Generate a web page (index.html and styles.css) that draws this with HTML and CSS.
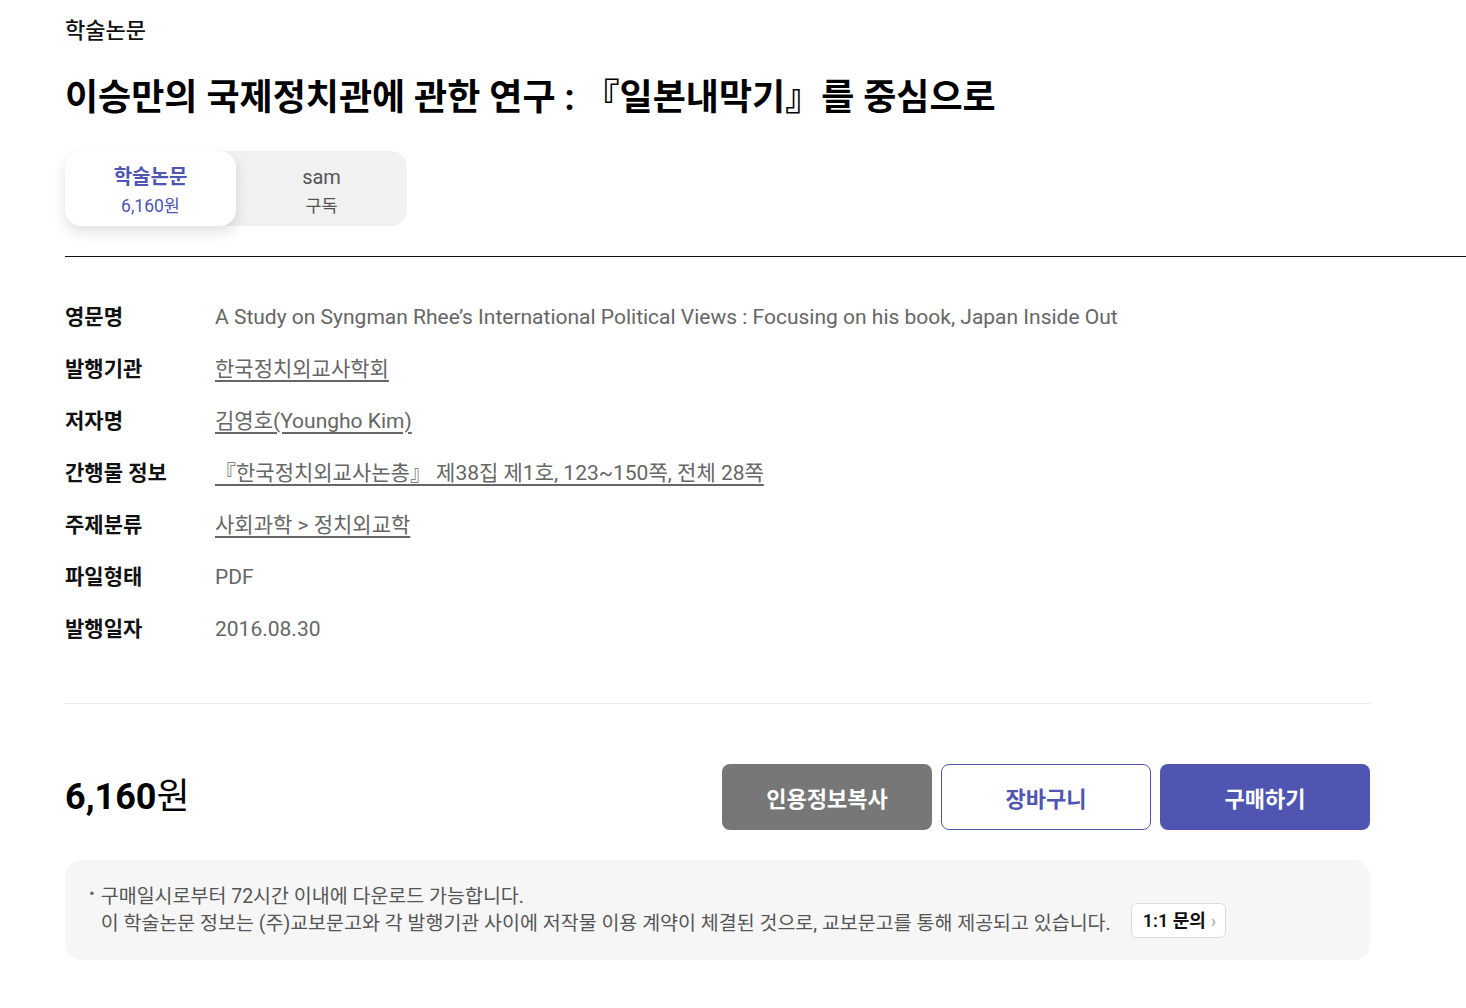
FILE: index.html
```html
<!DOCTYPE html>
<html lang="ko">
<head>
<meta charset="utf-8">
<link rel="stylesheet" href="styles.css">
</head>
<body>
<div class="page">
  <div class="category">학술논문</div>
  <h1 class="title">이승만의 국제정치관에 관한 연구 : 『일본내막기』를 중심으로</h1>
  <div class="tabs">
    <div class="tab active">
      <div class="tab-name">학술논문</div>
      <div class="tab-sub">6,160원</div>
    </div>
    <div class="tab">
      <div class="tab-name">sam</div>
      <div class="tab-sub">구독</div>
    </div>
  </div>
  <div class="rule"></div>
  <div class="content">
    <dl class="info">
      <div class="row"><dt>영문명</dt><dd>A Study on Syngman Rhee’s International Political Views : Focusing on his book, Japan Inside Out</dd></div>
      <div class="row"><dt>발행기관</dt><dd><a href="#">한국정치외교사학회</a></dd></div>
      <div class="row"><dt>저자명</dt><dd><a href="#">김영호(Youngho Kim)</a></dd></div>
      <div class="row"><dt>간행물 정보</dt><dd><a href="#">『한국정치외교사논총』 제38집 제1호, 123~150쪽, 전체 28쪽</a></dd></div>
      <div class="row"><dt>주제분류</dt><dd><a href="#">사회과학 &gt; 정치외교학</a></dd></div>
      <div class="row"><dt>파일형태</dt><dd>PDF</dd></div>
      <div class="row"><dt>발행일자</dt><dd>2016.08.30</dd></div>
    </dl>
    <div class="divider"></div>
    <div class="buy">
      <div class="price"><strong>6,160</strong>원</div>
      <div class="actions">
        <button class="btn btn-gray">인용정보복사</button>
        <button class="btn btn-outline">장바구니</button>
        <button class="btn btn-primary">구매하기</button>
      </div>
    </div>
    <div class="notice">
      <span class="bullet">•</span>
      <div class="notice-text">
        <p>구매일시로부터 72시간 이내에 다운로드 가능합니다.</p>
        <p class="last">이 학술논문 정보는 (주)교보문고와 각 발행기관 사이에 저작물 이용 계약이 체결된 것으로, 교보문고를 통해 제공되고 있습니다. <a class="ask" href="#">1:1 문의<span class="chev">›</span></a></p>
      </div>
    </div>
  </div>
</div>
</body>
</html>
```

FILE: styles.css
```css
* { box-sizing: border-box; }
html, body { margin: 0; padding: 0; background: #fff; }
body {
  font-family: Roboto, "Noto Sans CJK KR", sans-serif;
  color: #111;
}
.page { padding: 16px 0 40px 65px; }
.category { font-size: 22px; line-height: 30px; font-weight: 500; color: #111; }
.title {
  margin: 30px 0 0;
  font-size: 36px;
  line-height: 44px;
  font-weight: 700;
  color: #000;
}
.tabs {
  margin-top: 31px;
  display: flex;
  width: 342px;
  height: 75px;
  background: #f1f1f1;
  border-radius: 16px;
}
.tab {
  flex: 1;
  display: flex;
  flex-direction: column;
  align-items: center;
  justify-content: center;
  padding-top: 4px;
  border-radius: 16px;
  color: #555;
}
.tab.active {
  background: #fff;
  box-shadow: 0 6px 14px rgba(0,0,0,0.12);
  color: #4f55b0;
}
.tab-name { font-size: 20px; line-height: 26px; }
.tab.active .tab-name { font-weight: 700; }
.tab-sub { font-size: 17.5px; line-height: 24px; margin-top: 4px; }
.rule { margin-top: 30px; height: 1px; border-top: 1px solid #111; }
.content { width: 1305px; }
.info { margin: 45px 0 0; padding: 0; }
.row { display: flex; height: 52px; align-items: flex-start; }
.row dt { width: 150px; font-size: 21px; line-height: 30px; font-weight: 600; color: #111; }
.row dd { margin: 0; font-size: 21px; line-height: 30px; color: #666; }
.row dd a { color: #666; text-decoration: underline; text-underline-offset: 4px; }
.divider { margin-top: 37px; height: 1px; background: #e8e8e8; }
.buy {
  margin-top: 60px;
  display: flex;
  justify-content: space-between;
  align-items: center;
}
.price { font-size: 36px; line-height: 44px; color: #000; }
.price strong { font-weight: 700; }
.actions { display: flex; gap: 9px; }
.btn {
  width: 210px;
  height: 66px;
  border-radius: 8px;
  border: 1px solid transparent;
  font-family: Roboto, "Noto Sans CJK KR", sans-serif;
  font-size: 22px;
  font-weight: 700;
  cursor: pointer;
}
.btn-gray { background: #777; color: #fff; }
.btn-outline { background: #fff; color: #4f55b0; border-color: #4f55b0; }
.btn-primary { background: #4f55b0; color: #fff; }
.notice {
  margin-top: 30px;
  height: 100px;
  background: #f6f6f6;
  border-radius: 16px;
  padding: 23px 24px 0 24px;
  display: flex;
  gap: 6px;
  color: #555;
  font-size: 19.5px;
}
.bullet { font-size: 17px; line-height: 20px; color: #666; }
.notice-text p { margin: 0; line-height: 27px; }
.notice-text p.last { display: flex; align-items: center; gap: 20px; height: 27px; }
.ask {
  display: inline-flex;
  align-items: center;
  gap: 5px;
  height: 35px;
  margin-top: -6px;
  padding: 0 9px 0 11px;
  background: #fff;
  border: 1px solid #dcdcdc;
  border-radius: 6px;
  color: #111;
  font-size: 18px;
  font-weight: 600;
  text-decoration: none;
}
.chev { color: #aaa; font-size: 18px; font-weight: 400; }
```
